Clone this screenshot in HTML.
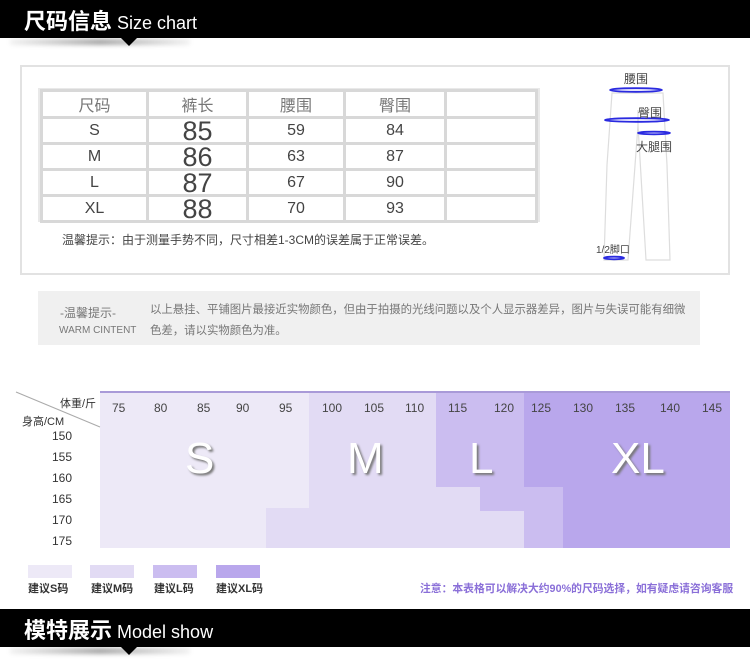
<!DOCTYPE html>
<html><head><meta charset="utf-8"><style>
*{margin:0;padding:0;box-sizing:border-box}
body{width:750px;height:664px;background:#fff;position:relative;overflow:hidden;font-family:"Liberation Sans","Noto Sans CJK SC",sans-serif}
.a{position:absolute;white-space:nowrap}
.bar{position:absolute;left:0;width:750px;height:38px;background:#000}
.bar .t{position:absolute;left:24px;top:4px;color:#fff;font-size:22px;font-weight:bold}
.bar .t span{font-size:18px;font-weight:normal;margin-left:5px}
.tri{position:absolute;width:0;height:0;border-left:8px solid transparent;border-right:8px solid transparent;border-top:8px solid #000}
.sh{position:absolute;height:6px;left:10px;width:180px;background:linear-gradient(90deg,rgba(0,0,0,0.05),rgba(0,0,0,0.35),rgba(0,0,0,0.05));filter:blur(2px)}
table{border-collapse:collapse}
td{border:3px solid #d8d8d8;background:#fff;text-align:center;color:#444;font-size:16px;height:26px;padding:0}
.r{position:absolute;background:#ede9f7}
</style></head><body>
<div class="bar" style="top:0"><div class="t">尺码信息<span>Size chart</span></div></div>
<div class="sh" style="top:39px"></div>
<div class="tri" style="left:121px;top:38px"></div>

<div class="a" style="left:20px;top:65px;width:710px;height:210px;border:2px solid #e2e2e2"></div>
<div class="a" style="left:38px;top:88px;width:502px;height:134px;background:#e9e9e9"></div>
<table class="a" style="left:40px;top:89px;width:498px">
<tr><td style="width:106px;color:#777">尺码</td><td style="width:100px;color:#777">裤长</td><td style="width:97px;color:#777">腰围</td><td style="width:101px;color:#777">臀围</td><td></td></tr>
<tr><td>S</td><td style="font-size:27px;line-height:20px">85</td><td>59</td><td>84</td><td></td></tr>
<tr><td>M</td><td style="font-size:27px;line-height:20px">86</td><td>63</td><td>87</td><td></td></tr>
<tr><td>L</td><td style="font-size:27px;line-height:20px">87</td><td>67</td><td>90</td><td></td></tr>
<tr><td>XL</td><td style="font-size:27px;line-height:20px">88</td><td>70</td><td>93</td><td></td></tr>
</table>
<div class="a" style="left:62px;top:231px;font-size:12px;color:#444">温馨提示：由于测量手势不同，尺寸相差1-3CM的误差属于正常误差。</div>

<svg class="a" style="left:590px;top:65px" width="110" height="205">
<g fill="none" stroke="#ddd" stroke-width="1.2">
<path d="M22 28 L17 100 L14 195 L38 195 L48 60 L56 195 L80 195 L77 100 L73 28 Z"/>
<path d="M48 60 L48 45"/>
</g>
<g fill="none" stroke="#2a2ae0" stroke-width="1.8">
<ellipse cx="46" cy="25" rx="26" ry="1.8"/>
<ellipse cx="47" cy="55" rx="32" ry="1.8"/>
<ellipse cx="64" cy="68" rx="16" ry="1.3"/>
<ellipse cx="24" cy="193" rx="10" ry="1.3"/>
</g>
</svg>
<div class="a" style="left:624px;top:70px;font-size:12px;color:#444">腰围</div>
<div class="a" style="left:638px;top:104px;font-size:12px;color:#444">臀围</div>
<div class="a" style="left:636px;top:138px;font-size:12px;color:#444">大腿围</div>
<div class="a" style="left:596px;top:241px;font-size:10px;color:#444">1/2脚口</div>

<div class="a" style="left:38px;top:291px;width:662px;height:54px;background:#f0f0f0"></div>
<div class="a" style="left:60px;top:304px;font-size:12px;color:#777">-温馨提示-</div>
<div class="a" style="left:59px;top:325px;font-size:10px;color:#777">WARM CINTENT</div>
<div class="a" style="left:150px;top:300px;font-size:11.4px;color:#777;line-height:21px">以上悬挂、平铺图片最接近实物颜色，但由于拍摄的光线问题以及个人显示器差异，图片与失误可能有细微<br>色差，请以实物颜色为准。</div>

<div class="r" style="left:100px;top:391px;width:630px;height:157px"></div>
<div class="r" style="left:309px;top:391px;width:127px;height:157px;background:#e2dbf4"></div>
<div class="r" style="left:266px;top:508px;width:43px;height:40px;background:#e2dbf4"></div>
<div class="r" style="left:436px;top:487px;width:88px;height:61px;background:#e2dbf4"></div>
<div class="r" style="left:436px;top:391px;width:88px;height:96px;background:#cbbdf0"></div>
<div class="r" style="left:480px;top:487px;width:44px;height:24px;background:#cbbdf0"></div>
<div class="r" style="left:524px;top:487px;width:39px;height:61px;background:#cbbdf0"></div>
<div class="r" style="left:524px;top:391px;width:206px;height:96px;background:#b9a7ec"></div>
<div class="r" style="left:563px;top:487px;width:167px;height:61px;background:#b9a7ec"></div>
<div class="r" style="left:100px;top:391px;width:630px;height:2px;background:#a99ad8"></div>
<svg class="a" style="left:14px;top:391px" width="90" height="40"><line x1="2" y1="1" x2="86" y2="36" stroke="#aaa" stroke-width="1"/></svg>
<div class="a" style="left:60px;top:395px;font-size:11px;color:#333">体重/斤</div>
<div class="a" style="left:22px;top:413px;font-size:11px;color:#333">身高/CM</div>
<div class="a" style="left:52px;top:426px;font-size:12px;color:#333;line-height:21px">150<br>155<br>160<br>165<br>170<br>175</div>
<div class="a" style="top:401px;font-size:12px;color:#444;left:0;width:750px">
<span class="a" style="left:112px">75</span><span class="a" style="left:154px">80</span><span class="a" style="left:197px">85</span><span class="a" style="left:236px">90</span><span class="a" style="left:279px">95</span><span class="a" style="left:322px">100</span><span class="a" style="left:364px">105</span><span class="a" style="left:405px">110</span><span class="a" style="left:448px">115</span><span class="a" style="left:494px">120</span><span class="a" style="left:531px">125</span><span class="a" style="left:573px">130</span><span class="a" style="left:615px">135</span><span class="a" style="left:660px">140</span><span class="a" style="left:702px">145</span></div>
<div class="a" style="top:434px;font-size:44px;color:#fff;text-shadow:2px 2px 2px #777;left:0">
<span class="a" style="left:185px">S</span><span class="a" style="left:347px">M</span><span class="a" style="left:469px">L</span><span class="a" style="left:611px">XL</span></div>

<div class="a" style="left:28px;top:565px;width:44px;height:13px;background:#ede9f7"></div>
<div class="a" style="left:90px;top:565px;width:44px;height:13px;background:#e2dbf4"></div>
<div class="a" style="left:153px;top:565px;width:44px;height:13px;background:#cbbdf0"></div>
<div class="a" style="left:216px;top:565px;width:44px;height:13px;background:#b9a7ec"></div>
<div class="a" style="left:28px;top:580px;font-size:11px;color:#333;font-weight:bold">建议S码</div>
<div class="a" style="left:91px;top:580px;font-size:11px;color:#333;font-weight:bold">建议M码</div>
<div class="a" style="left:154px;top:580px;font-size:11px;color:#333;font-weight:bold">建议L码</div>
<div class="a" style="left:216px;top:580px;font-size:11px;color:#333;font-weight:bold">建议XL码</div>
<div class="a" style="left:420px;top:580px;font-size:10.8px;color:#8a6fd8;font-weight:bold">注意：本表格可以解决大约90%的尺码选择，如有疑虑请咨询客服</div>

<div class="bar" style="top:609px"><div class="t">模特展示<span>Model show</span></div></div>
<div class="sh" style="top:648px"></div>
<div class="tri" style="left:121px;top:647px"></div>
</body></html>
